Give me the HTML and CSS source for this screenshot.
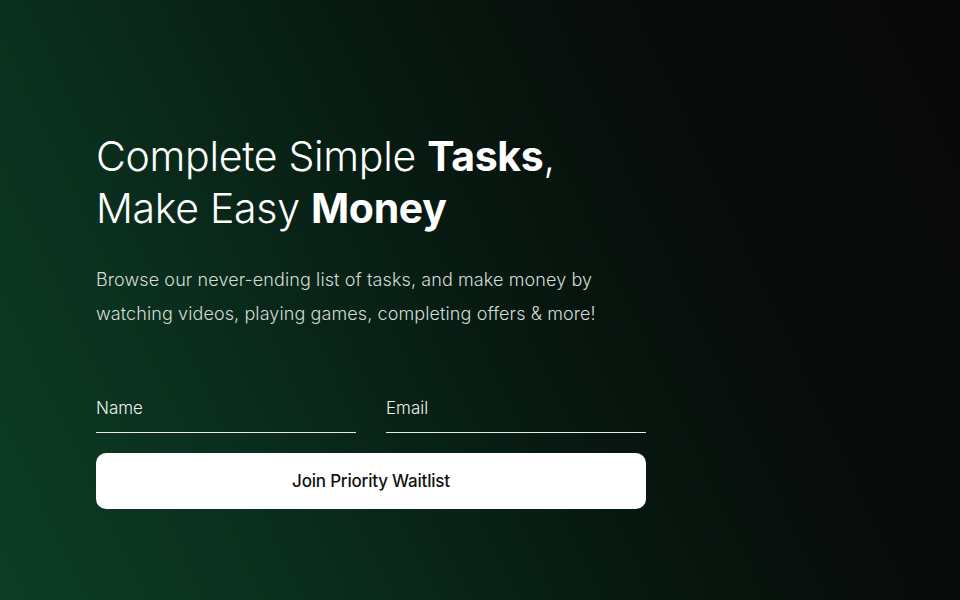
FILE: index.html
```html
<!DOCTYPE html>
<html>
<head>
<meta charset="utf-8">
<link rel="stylesheet" href="styles.css">
</head>
<body>
<main class="hero">
  <div class="content">
    <h1 class="title">Complete Simple <b>Tasks</b>,<br>Make Easy <b>Money</b></h1>
    <p class="lead">Browse our never-ending list of tasks, and make money by<br>watching videos, playing games, completing offers &amp; more!</p>
    <form class="form">
      <div class="fields">
        <label class="field"><input type="text" placeholder="Name"></label>
        <label class="field"><input type="email" placeholder="Email"></label>
      </div>
      <button type="button" class="btn">Join Priority Waitlist</button>
    </form>
  </div>
</main>
</body>
</html>
```
FILE: styles.css
```css
html, body {
  margin: 0;
  padding: 0;
  height: 100%;
}
body {
  font-family: Inter, "Liberation Sans", sans-serif;
  color: #fff;
  background: #080808;
}
.hero {
  height: 600px;
  box-sizing: border-box;
  padding: 130px 0 0 96px;
  background:
    linear-gradient(65deg, #0c3d26 0%, #0a2e1d 25%, #071a11 50%, #080c0a 72%, #080808 100%);
}
.content {
  width: 550px;
}
.title {
  margin: 0;
  font-weight: 300;
  font-size: 41px;
  line-height: 52px;
  letter-spacing: -0.3px;
}
.title b {
  font-weight: 700;
}
.lead {
  margin: 29px 0 0;
  font-weight: 300;
  font-size: 18px;
  line-height: 34px;
  color: #d4dcd7;
  letter-spacing: 0.1px;
}
.form {
  margin-top: 65px;
}
.fields {
  display: flex;
  gap: 30px;
}
.field {
  flex: 1;
  display: block;
  border-bottom: 1px solid #e8e8e8;
}
.field input {
  width: 100%;
  box-sizing: border-box;
  background: transparent;
  border: 0;
  outline: 0;
  padding: 0 0 12px;
  font-family: inherit;
  font-weight: 300;
  font-size: 17px;
  line-height: 24px;
  color: #fff;
}
.field input::placeholder {
  color: #eef0ef;
  opacity: 1;
}
.btn {
  margin-top: 20px;
  width: 100%;
  height: 56px;
  border: 0;
  border-radius: 10px;
  background: #fff;
  color: #111;
  font-family: inherit;
  font-weight: 500;
  font-size: 17px;
  letter-spacing: -0.2px;
  cursor: pointer;
}
```
